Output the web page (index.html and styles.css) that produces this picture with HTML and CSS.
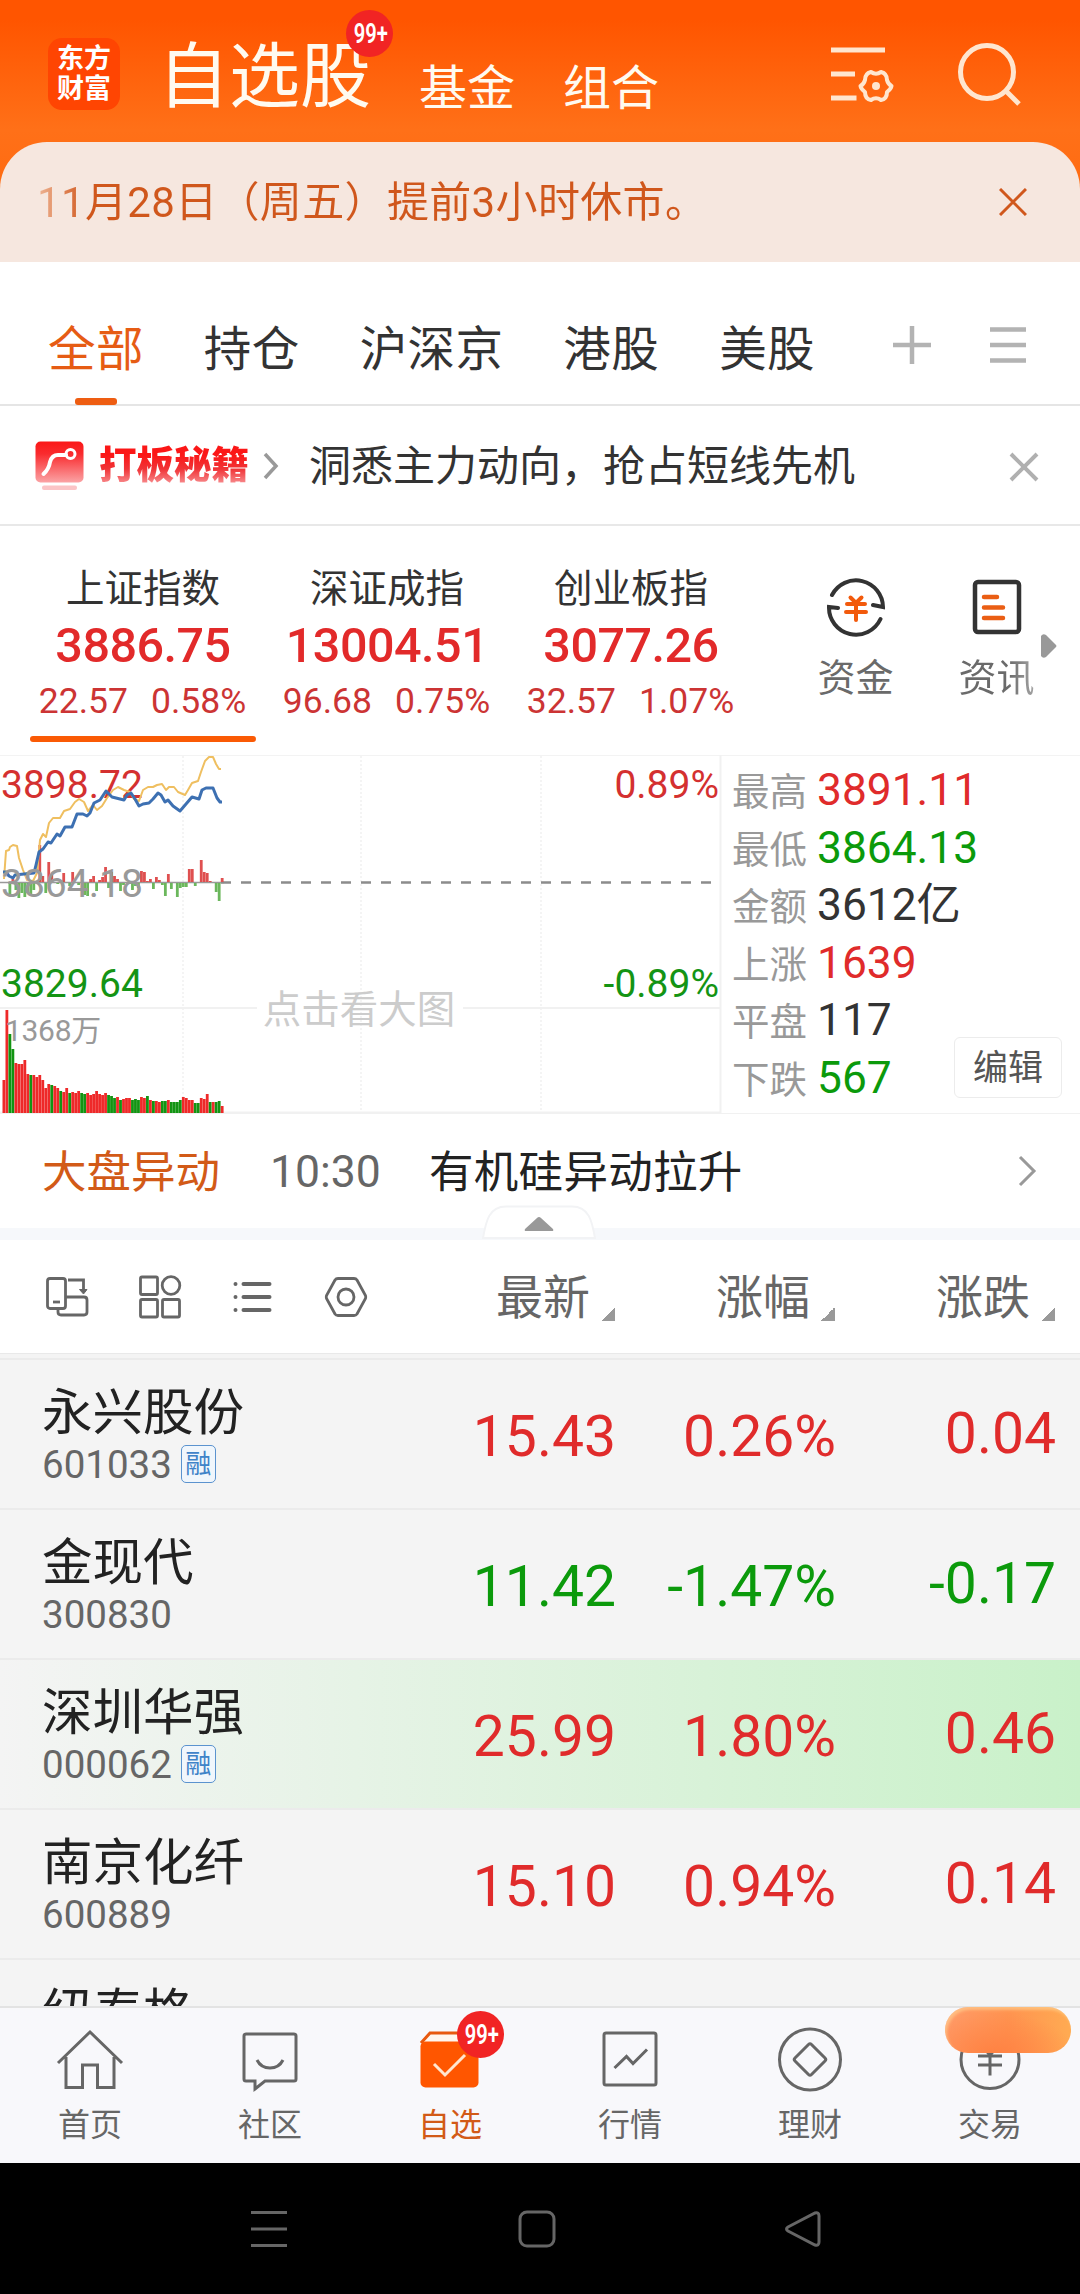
FILE: index.html
```html
<!DOCTYPE html>
<html lang="zh-CN">
<head>
<meta charset="utf-8">
<title>自选股</title>
<link rel="stylesheet" href="styles.css">
</head>
<body>
<div class="app">
  <header class="top">
    <div class="logo"><span>东方</span><span>财富</span></div>
    <nav class="modes">
      <span class="mode-main">自选股<b class="badge"><i>99+</i></b></span>
      <span class="mode">基金</span>
      <span class="mode">组合</span>
    </nav>
    <svg class="ico-set" width="66" height="60" viewBox="0 0 66 60" fill="none" stroke="#ffe6cf" stroke-width="5">
      <path d="M1 6H55M1 30H25M1 54H26.500"/>
      <path stroke-width="4" stroke-linejoin="round" d="M41 28Q46 31.500 51 28Q57 29.500 57 36Q58 40 61.500 42Q61 45 57 48Q57 55 51 56Q46 52.500 41 56Q35 55 35 48Q31 45 30.500 42Q34 40 35 36Q35 29.500 41 28Z"/>
      <circle cx="46" cy="42" r="4" fill="#ffe6cf" stroke="none"/>
    </svg>
    <svg class="ico-search" width="66" height="66" viewBox="0 0 66 66" fill="none" stroke="#ffe6cf" stroke-width="5">
      <circle cx="31" cy="31" r="26.500"/><path d="M50 50L63 63"/>
    </svg>
  </header>

  <section class="notice">
    <p>11月28日（周五）提前3小时休市。</p>
    <svg width="28" height="28" viewBox="0 0 28 28" stroke="#d0571c" stroke-width="3"><path d="M1 1L27 27M27 1L1 27"/></svg>
  </section>

  <nav class="tabs">
    <span class="tab on">全部</span><span class="tab">持仓</span><span class="tab">沪深京</span><span class="tab">港股</span><span class="tab">美股</span>
    <svg class="ico-add" width="38" height="38" viewBox="0 0 38 38" stroke="#b3b3b3" stroke-width="4.500"><path d="M0 19H38M19 0V38"/></svg>
    <svg class="ico-more" width="36" height="36" viewBox="0 0 36 36" stroke="#b3b3b3" stroke-width="4.500"><path d="M0 2.500H36M0 18H36M0 33.500H36"/></svg>
  </nav>

  <section class="promo">
    <svg class="ico-promo" width="50" height="50" viewBox="0 0 50 50">
      <defs><linearGradient id="pg" x2="0" y2="1"><stop offset="0" stop-color="#fb1717"/><stop offset=".3" stop-color="#f92b2e"/><stop offset="1" stop-color="#fba3a5"/></linearGradient></defs>
      <rect x="0.500" y="0.500" width="48" height="41" rx="5" fill="url(#pg)"/>
      <path d="M8.500 33Q14 28 15 21Q17 14 23 14H31" fill="none" stroke="#fff" stroke-width="4" stroke-linecap="round"/>
      <circle cx="35.500" cy="13" r="4.500" fill="none" stroke="#fff" stroke-width="3"/>
      <rect x="7" y="44.500" width="35" height="4.500" rx="2" fill="#fbc4c6"/>
    </svg>
    <b class="promo-name">打板秘籍</b>
    <svg class="ico-gt" width="16" height="28" viewBox="0 0 16 28" fill="none" stroke="#999" stroke-width="3.500"><path d="M2 2L13 14L2 26"/></svg>
    <span class="promo-text">洞悉主力动向，抢占短线先机</span>
    <svg class="ico-close" width="30" height="30" viewBox="0 0 30 30" stroke="#b0b0b0" stroke-width="4"><path d="M2 2L28 28M28 2L2 28"/></svg>
  </section>

  <section class="indices">
    <div class="index on"><h3>上证指数</h3><strong>3886.75</strong><p><span>22.57</span><span>0.58%</span></p></div>
    <div class="index"><h3>深证成指</h3><strong>13004.51</strong><p><span>96.68</span><span>0.75%</span></p></div>
    <div class="index"><h3>创业板指</h3><strong>3077.26</strong><p><span>32.57</span><span>1.07%</span></p></div>
    <div class="tool fund">
      <svg width="60" height="60" viewBox="0 0 60 60" fill="none" stroke="#333" stroke-width="4" stroke-linecap="round">
        <path d="M6 18A27 27 0 0 1 57 30L47 28"/><path d="M54.500 42A27 27 0 0 1 3 30L12 31"/>
        <path stroke="#f25a0c" d="M24.500 20.500L30 26L35.500 20.500M21 27H39M20 35H40M30 27V43"/>
      </svg><span>资金</span>
    </div>
    <div class="tool info">
      <svg width="60" height="60" viewBox="0 0 60 60" fill="none" stroke="#333" stroke-width="4.500" stroke-linecap="round">
        <rect x="8" y="5" width="44" height="50" rx="3"/>
        <path stroke="#ea5e14" d="M17 20H30M17 30.500H36M17 41H36"/>
      </svg><span>资讯</span>
    </div>
    <svg class="ico-next" width="16" height="26" viewBox="0 0 16 26"><path d="M0 3Q2 0 5 2L15 12Q16 13 15 14L5 24Q2 26 0 23Z" fill="#999"/></svg>
  </section>

  <section class="market">
    <svg class="chart" width="722" height="359" viewBox="0 755 722 359">
      <g stroke="#f1f1f1" stroke-width="2" fill="none">
        <path d="M720.500 755V1113M0 1008H257M463 1008H720M0 1112.500H720"/>
        <path stroke-dasharray="2 2" stroke-width="1.500" d="M183 756V1112M361 756V1112M541 756V1112"/>
      </g>
      <g class="axis"><text class="up" x="1" y="798">3898.72</text></g>
      <path d="M0 882.500H224" stroke="#999" stroke-width="1.500"/>
      <path d="M221 882.500H712" stroke="#8c8c8c" stroke-width="2.500" stroke-dasharray="10 10"/>
      <g id="flow"></g>
      <g id="volume"></g>
      <path fill="none" stroke="#efbf60" stroke-width="2" stroke-linejoin="round" d="M4 879L6 851L9 850L10 847L13 845L17 846L19 858L23 870L27 880L33 881L37 873L40 840L43 834L46 837L49 823L53 818L60 818L64 811L70 809L75 802L79 799L84 802L88 811L93 805L97 810L102 806L107 798L113 790L118 787L124 790L130 792L134 799L139 801L143 790L148 787L153 787L157 785L162 784L166 790L169 787L174 787L178 792L185 795L188 790L192 783L198 781L201 772L205 761L209 757L213 757L216 764L219 769L221 769"/>
      <path fill="none" stroke="#3d70b2" stroke-width="3" stroke-linejoin="round" d="M3 872L6 872L9 876L13 878L15 875L24 874L34 873L36 865L39 852L43 849L48 842L51 843L57 834L60 836L65 827L72 827L77 814L83 814L87 816L90 813L94 803L100 800L106 791L112 797L120 799L124 800L127 795L131 793L135 799L139 806L143 804L149 803L153 799L158 793L161 795L165 802L168 800L173 806L180 811L186 804L192 797L199 799L202 790L206 788L213 788L217 798L220 802L222 802"/>
      <g class="axis"><text class="flat" x="1" y="897">3864.18</text><text class="down" x="1" y="997">3829.64</text></g>
      <g class="axis end"><text class="up" x="719" y="798">0.89%</text><text class="down" x="719" y="997">-0.89%</text></g>
      <text class="vol" x="5" y="1041">1368万</text>
      <text class="hint" x="359" y="1023">点击看大图</text>
    </svg>
    <dl class="stats">
      <div><dt>最高</dt><dd class="up">3891.11</dd></div>
      <div><dt>最低</dt><dd class="down">3864.13</dd></div>
      <div><dt>金额</dt><dd>3612亿</dd></div>
      <div><dt>上涨</dt><dd class="up">1639</dd></div>
      <div><dt>平盘</dt><dd>117</dd></div>
      <div><dt>下跌</dt><dd class="down">567</dd></div>
    </dl>
    <button class="edit">编辑</button>
  </section>

  <section class="news">
    <span class="news-tag">大盘异动</span><time>10:30</time><span class="news-title">有机硅异动拉升</span>
    <svg width="20" height="32" viewBox="0 0 20 32" fill="none" stroke="#999" stroke-width="3"><path d="M3 2L17 16L3 30"/></svg>
    <svg class="collapse" width="114" height="35" viewBox="0 0 114 35"><path d="M1 33C4 16 7 1.500 24 1.500H90C107 1.500 110 16 113 33Z" fill="#fff" stroke="#f2f3f5" stroke-width="2"/><path d="M43 24L55 13Q57 11 59 13L71 24Q72 26 70 26H44Q42 26 43 24Z" fill="#999"/></svg>
  </section>

  <section class="thead">
    <svg width="44" height="44" viewBox="0 0 44 44" fill="none" stroke="#666" stroke-width="2.800">
      <rect x="2.500" y="3.500" width="18" height="30" rx="2.500"/><path d="M8 27H15"/><path d="M23 5H38.500V15"/><path d="M34.500 14.500H42L38.500 19Z" fill="#666" stroke-width="1"/><path d="M21 22H39Q42 22 42 25V37Q42 40 39 40H16Q13 40 13 37V34"/>
    </svg>
    <svg width="44" height="44" viewBox="0 0 44 44" fill="none" stroke="#666" stroke-width="2.800">
      <rect x="2.500" y="2" width="17" height="17.500" rx="1.500"/><circle cx="33" cy="10.500" r="8.800"/><rect x="2.500" y="24.500" width="17" height="17.500" rx="1.500"/><rect x="24.500" y="24.500" width="17" height="17.500" rx="1.500"/>
    </svg>
    <svg width="44" height="44" viewBox="0 0 44 44" fill="none" stroke="#666" stroke-width="4" stroke-linecap="round">
      <path d="M12.500 9H38.500M12.500 22H38.500M12.500 35H38.500M4.500 8.900V9.100M4.500 21.900V22.100M4.500 34.900V35.100"/>
    </svg>
    <svg width="44" height="44" viewBox="0 0 44 44" fill="none" stroke="#666" stroke-width="2.800">
      <path d="M14 3.500H30Q32 3.500 33 5L41.500 20.500Q42 22 41.500 23.500L33 39Q32 40.500 30 40.500H14Q12 40.500 11 39L2.500 23.500Q2 22 2.500 20.500L11 5Q12 3.500 14 3.500Z"/><circle cx="22" cy="22" r="8"/>
    </svg>
    <div class="cols"><span>最新</span><span>涨幅</span><span>涨跌</span></div>
  </section>

  <main class="list">
    <div class="row up"><div class="stock"><b>永兴股份</b><p>601033<em>融</em></p></div><span>15.43</span><span>0.26%</span><span>0.04</span></div>
    <div class="row down"><div class="stock"><b>金现代</b><p>300830</p></div><span>11.42</span><span>-1.47%</span><span>-0.17</span></div>
    <div class="row up flash"><div class="stock"><b>深圳华强</b><p>000062<em>融</em></p></div><span>25.99</span><span>1.80%</span><span>0.46</span></div>
    <div class="row up"><div class="stock"><b>南京化纤</b><p>600889</p></div><span>15.10</span><span>0.94%</span><span>0.14</span></div>
    <div class="row"><div class="stock"><b>纽泰格</b></div></div>
  </main>

  <nav class="dock">
    <a><svg width="70" height="70" viewBox="0 0 70 70"><path d="M3 39L35 8L67 39M11 33V63.500H27.500V41H42.500V63.500H59V33"/></svg><span>首页</span></a>
    <a><svg width="70" height="70" viewBox="0 0 70 70"><path d="M11 10H59Q61 10 61 12V55Q61 57 59 57H30L20 65V57H11Q9 57 9 55V12Q9 10 11 10Z"/><path d="M22 36Q26 44 35 44Q44 44 48 36"/></svg><span>社区</span></a>
    <a class="on"><svg width="70" height="70" viewBox="0 0 70 70"><path d="M6 19L15 9H55L64 19" fill="#fff6ee" stroke="#e8590f"/><rect x="5.500" y="17.500" width="58" height="46" rx="5" fill="#ff5600" stroke="none"/><path d="M19 40L30 51L50 31" stroke="#ffe6cf"/></svg><span>自选</span><b class="badge"><i>99+</i></b></a>
    <a><svg width="70" height="70" viewBox="0 0 70 70"><rect x="9" y="9" width="52" height="52" rx="2"/><path d="M19.500 44L31.500 32.500L38 39.500L52 25.500"/></svg><span>行情</span></a>
    <a><svg width="70" height="70" viewBox="0 0 70 70"><circle cx="35" cy="35.500" r="30.500"/><path d="M33.500 20.500Q35 19 36.500 20.500L50 34Q51.500 35.500 50 37L36.500 50.500Q35 52 33.500 50.500L20 37Q18.500 35.500 20 34Z"/></svg><span>理财</span></a>
    <a><svg width="70" height="70" viewBox="0 0 70 70"><circle cx="35" cy="35.500" r="29"/><path d="M25 20L35 31L45 20M23 32H47M23 41H47M35 30V51.500"/></svg><span>交易</span><i class="pill"></i></a>
  </nav>

  <footer class="system">
    <svg width="40" height="40" viewBox="0 0 40 40"><path d="M2 3.500H38M2 20H38M2 36.500H38"/></svg>
    <svg width="40" height="40" viewBox="0 0 40 40"><rect x="3" y="3" width="34" height="34" rx="7"/></svg>
    <svg width="40" height="40" viewBox="0 0 40 40"><path d="M5 18L32 4Q36 3 36 7V33Q36 37 32 36L5 22Q2 20 5 18Z"/></svg>
  </footer>
</div>
<script src="chart.js"></script>
</body>
</html>
```
FILE: styles.css
```css
* { box-sizing: border-box; margin: 0; padding: 0; }
body { width: 1080px; background: #fff; color: #333; font-family: Roboto, "Noto Sans CJK SC", sans-serif; }
svg { display: block; flex: none; }
b, strong, h3, i, em { font-weight: 400; font-style: normal; }
.app { width: 1080px; height: 2294px; overflow: hidden; display: flex; flex-direction: column; background: linear-gradient(#ff5500 0, #ff5500 20px, #ff7018 130px, #ff6a10 200px); }
.app > * { flex: none; }
.up { color: #e02b2b; fill: #d43030; }
.down { color: #0b9a0b; fill: #149414; }

.top { height: 142px; display: flex; align-items: flex-start; padding-left: 48px; color: #fffaf0; }
.logo { width: 72px; height: 72px; margin-top: 38px; border-radius: 14px; background: #ff4502; display: flex; flex-direction: column; justify-content: center; color: #fff; font-size: 27px; line-height: 30px; text-align: center; font-weight: 700; }
.modes { display: flex; margin-left: 38px; width: 672px; white-space: nowrap; }
.mode-main { position: relative; font-size: 71px; line-height: 80px; margin-top: 37px; margin-right: 48px; width: 213px; }
.mode { font-size: 48px; line-height: 60px; margin-top: 59px; margin-right: 48px; }
.badge { position: absolute; width: 47px; height: 47px; border-radius: 50%; background: #f12424; color: #fff; display: flex; align-items: center; justify-content: center; font-size: 28px; line-height: 47px; }
.badge i { transform: translateX(1px) scaleX(.72); font-weight: 600; }
.mode-main .badge { left: 188px; top: -27px; }
.ico-set { margin-top: 44px; margin-right: 60px; }
.ico-search { margin-top: 41px; }

.notice { height: 120px; border-radius: 47px 47px 0 0; background: #f6e7df; display: flex; align-items: center; justify-content: space-between; padding: 0 53px 0 37px; }
.notice p { font-size: 42px; letter-spacing: .35px; line-height: 60px; padding-top: 2px; color: transparent; background: linear-gradient(90deg, #eeb595 0, #d0571c 50px); background-clip: text; -webkit-background-clip: text; }

.tabs { height: 144px; background: #fff; border-bottom: 2px solid #e5e5e5; display: flex; padding-left: 48px; font-size: 47.500px; gap: 60px; line-height: 60px; color: #333; }
.tab { padding-top: 58px; position: relative; white-space: nowrap; letter-spacing: .4px; }
.tab.on { color: #e65c14; }
.tab.on::after { content: ""; position: absolute; left: 27px; bottom: -1px; width: 42px; height: 7px; border-radius: 3px; background: #ee5d12; }
.ico-add { margin-top: 64px; margin-left: 18px; }
.ico-more { margin-top: 65px; margin-left: -1px; }

.promo { height: 120px; background: #fff; border-bottom: 2px solid #e8e8e8; display: flex; align-items: flex-start; padding-left: 35px; }
.ico-promo { margin-top: 35px; }
.promo-name { margin: 29px 0 0 14px; font-size: 37.500px; line-height: 60px; font-weight: 900; color: transparent; background: linear-gradient(#fb1717 20px, #f03437 34px, #f9a0a2 52px); background-clip: text; -webkit-background-clip: text; white-space: nowrap; }
.ico-gt { margin: 46px 0 0 14px; }
.promo-text { margin: 31px 0 0 30px; width: 700px; font-size: 42px; line-height: 60px; white-space: nowrap; }
.ico-close { margin-top: 46px; }

.indices { height: 229px; background: #fff; display: flex; padding-left: 21px; position: relative; }
.index { width: 244px; display: flex; flex-direction: column; align-items: center; position: relative; padding-top: 38px; }
.index h3 { font-size: 38.500px; line-height: 50px; }
.index strong { font-size: 48.500px; letter-spacing: -.5px; line-height: 60px; font-weight: 500; color: #e22a2a; margin-top: 2px; }
.index p { display: flex; gap: 23px; margin-left: -1px; font-size: 35.500px; line-height: 50px; color: #cc3434; }
.index.on::after { content: ""; position: absolute; left: 9px; top: 210px; width: 226px; height: 6px; border-radius: 3px; background: #fa5a05; }
.tool { width: 141px; display: flex; flex-direction: column; align-items: center; padding-top: 51px; font-size: 38px; color: #6a6a6a; line-height: 50px; }
.tool span { margin-top: 16px; }
.fund { margin-left: 32px; }
.info span { background: linear-gradient(90deg, #6a6a6a 65%, #a5a5a5); background-clip: text; -webkit-background-clip: text; color: transparent; }
.ico-next { position: absolute; left: 1041px; top: 107px; }

.market { height: 359px; background: #fff; display: flex; border-top: 1px solid #f3f3f3; border-bottom: 1px solid #f1f1f1; position: relative; }
.chart { margin-top: -1px; }
.axis { font-size: 39px; }
.end { text-anchor: end; }
.flat, .vol { fill: #999; }
.vol { font-size: 30px; letter-spacing: -.3px; }
.hint { font-size: 38.500px; text-anchor: middle; fill: #ccc; }
.stats { padding-top: 6px; margin-left: 10px; }
.stats div { display: flex; height: 57.600px; line-height: 57.600px; }
.stats dt { width: 85px; font-size: 37.500px; color: #999; padding-top: 2px; }
.stats dd { font-size: 44.300px; }
.edit { position: absolute; left: 954px; top: 281px; width: 108px; height: 61px; border: 1.500px solid #ececec; border-radius: 6px; background: #fff; font: 35px/56px Roboto, "Noto Sans CJK SC", sans-serif; color: #555; padding-top: 2px; }

.news { height: 126px; background: #fff; border-bottom: 12px solid #f6f8fb; position: relative; display: flex; align-items: center; padding-left: 42px; font-size: 44.500px; line-height: 60px; white-space: nowrap; }
.news-tag { color: #d25a17; width: 228px; padding-top: 3px; }
.news time { width: 159px; color: #666; padding-top: 1px; }
.news-title { color: #222; width: 588px; letter-spacing: .3px; padding-top: 3px; }
.collapse { position: absolute; left: 482px; top: 91px; }

.thead { height: 114px; background: #fff; border-bottom: 1px solid #e9e9e9; display: flex; align-items: center; padding: 0 0 0 45px; gap: 49px; color: #666; }
.cols { display: flex; margin-left: 79px; font-size: 47px; line-height: 60px; }
.cols span { width: 220px; position: relative; padding-top: 2px; }
.cols span::after { content: ""; position: absolute; left: 105px; top: 41px; width: 14px; height: 14px; background: linear-gradient(135deg, transparent 50%, #999 50%); }

.list { height: 652px; background: #f4f4f4; padding-top: 4px; overflow: hidden; }
.row { height: 150px; border-top: 2px solid #ebebeb; display: flex; font-size: 57px; line-height: 70px; padding-left: 42px; }
.row > span { padding-top: 42px; width: 220px; text-align: right; }
.row > span:last-child { padding-top: 39px; }
.stock { width: 354px; padding-top: 18px; color: #222; }
.stock b { display: block; font-size: 50.500px; line-height: 70px; }
.stock p { display: flex; font-size: 38.500px; line-height: 46px; margin-top: -6px; color: #666; }
.stock em { width: 35px; height: 38px; margin: 3px 0 0 9px; border: 1.500px solid #5b93cf; border-radius: 5px; background: #f0f6fc; color: #3f83c8; font-size: 26px; line-height: 36px; text-align: center; }
.flash { background: linear-gradient(90deg, #f4f4f4 0, #e6f3e6 33%, #c9f1c9 100%); }

.dock { height: 157px; background: #f8f8fb; border-top: 2px solid #e3e3e3; display: flex; color: #666; }
.dock a { width: 180px; display: flex; flex-direction: column; align-items: center; padding-top: 16px; position: relative; font-size: 32px; line-height: 44px; }
.dock a svg { fill: none; stroke: #666; stroke-width: 3; margin-left: -1px; }
.dock a > span { margin-top: 9px; }
.dock .on { color: #d25a17; }
.dock .badge { left: 97px; top: 3px; }
.pill { position: absolute; left: 45px; top: -1px; width: 126px; height: 46px; border-radius: 23px; background: radial-gradient(80px 40px at 50px 46px, #ff8243, rgba(255,130,67,0)), linear-gradient(90deg, #ff9a68, #ff9350 50%, #ffab52); box-shadow: inset 2px 3px 3px rgba(255,214,150,.6); }

.system { height: 131px; background: #000; display: flex; padding: 46px 0 0 249px; gap: 228px; }
.system svg { fill: none; stroke: #666; stroke-width: 3; }
.system svg:last-child { margin-left: -2px; }
```
FILE: chart.js
```javascript
// Bars are 3px apart; volume heights are in px, the letter is the colour.
const volume = "33r 103r 79g 64g 50r 49r 49r 53r 39r 38g 38r 36r 38r 33r 25r 29r 28g 27r 25r 22g 21r 25r 20g 21r 20r 22r 20g 19g 20r 18r 19r 22r 19r 18r 20r 18g 17g 15g 16r 13g 14r 15r 15r 13g 14g 13g 16r 15r 17g 13r 12g 12r 11r 12g 12g 13r 11g 11g 11g 13g 16r 15r 13r 13r 10g 10g 15r 14r 19r 11g 11r 11g 12g 7r".split(" ");
const flow = [0, 0, -11, 3, -7, -15, -10, -14, -10, -11, -7, 0, 37, 6, -10, 20, 7, 0, -1, 1, 9, 0, -3, 10, 0, -2, 0, -12, -13, 3, 6, -8, 2, 5, 15, -5, 10, 6, 3, -8, -2, 0, -1, -7, -3, -5, 11, 10, 1, 3, -6, 5, 2, -2, -13, 8, -6, 0, -14, -5, -4, -4, 13, 13, -3, 0, 22, 10, 9, 1, 0, -9, -18, 4];
const ns = "http://www.w3.org/2000/svg";
function bar(parent, i, y, h, fill, w) {
  const r = document.createElementNS(ns, "rect");
  r.setAttribute("x", 2.5 + i * 2.99);
  r.setAttribute("y", y);
  r.setAttribute("width", w);
  r.setAttribute("height", h);
  r.setAttribute("fill", fill);
  parent.appendChild(r);
}
const vg = document.getElementById("volume");
volume.forEach((v, i) => {
  const h = parseInt(v, 10);
  bar(vg, i, 1113 - h, h, v.endsWith("r") ? "#ee2929" : "#129412", 2.8);
});
const fg = document.getElementById("flow");
flow.forEach((v, i) => {
  if (v) bar(fg, i, v > 0 ? 882 - v : 883, Math.abs(v), v > 0 ? "#df5050" : "#6bb75c", 2.8);
});
```
